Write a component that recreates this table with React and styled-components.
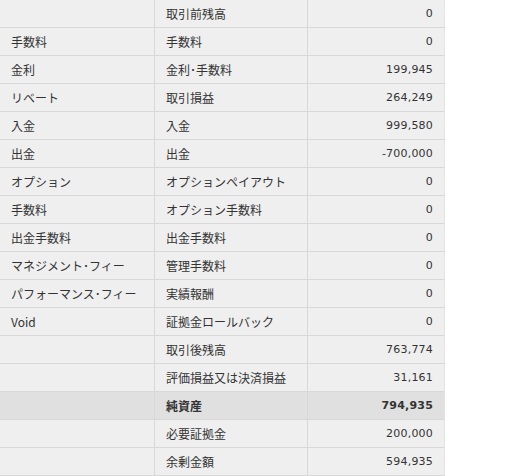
import React from "react";
import styled, { createGlobalStyle } from "styled-components";

const Global = createGlobalStyle`
  html, body { margin: 0; padding: 0; background: #ffffff; }
  body { font-family: "Noto Sans CJK JP", sans-serif; }
`;

const Table = styled.div`
  display: grid;
  grid-template-columns: 155px 153px 137px;
  grid-auto-rows: 28px;
  width: 445px;
  color: #333333;
`;

const Cell = styled.div`
  box-sizing: border-box;
  display: flex;
  align-items: center;
  justify-content: ${(p) => (p.$right ? "flex-end" : "flex-start")};
  padding: 0 11px;
  background: ${(p) => (p.$highlight ? "#e0e0e0" : "#efefef")};
  border-bottom: 1px solid #d8d8d8;
  border-right: ${(p) => (p.$last ? "1px solid #e4e4e4" : "1px solid #d8d8d8")};
  font-family: ${(p) =>
    p.$right
      ? '"DejaVu Sans", Verdana, sans-serif'
      : '"Noto Sans CJK JP", sans-serif'};
  font-size: ${(p) => (p.$right ? "11px" : "12px")};
  font-weight: ${(p) => (p.$bold ? 700 : 400)};
  letter-spacing: ${(p) => (p.$right ? "0.2px" : "0")};
  white-space: nowrap;
  line-height: 14px;
`;

const rows = [
  ["", "取引前残高", "0"],
  ["手数料", "手数料", "0"],
  ["金利", "金利･手数料", "199,945"],
  ["リベート", "取引損益", "264,249"],
  ["入金", "入金", "999,580"],
  ["出金", "出金", "-700,000"],
  ["オプション", "オプションペイアウト", "0"],
  ["手数料", "オプション手数料", "0"],
  ["出金手数料", "出金手数料", "0"],
  ["マネジメント･フィー", "管理手数料", "0"],
  ["パフォーマンス･フィー", "実績報酬", "0"],
  ["Void", "証拠金ロールバック", "0"],
  ["", "取引後残高", "763,774"],
  ["", "評価損益又は決済損益", "31,161"],
  ["", "純資産", "794,935", true],
  ["", "必要証拠金", "200,000"],
  ["", "余剰金額", "594,935"],
];

export default function App() {
  return (
    <>
      <Global />
      <Table>
        {rows.map(([a, b, c, hl], i) => (
          <React.Fragment key={i}>
            <Cell $highlight={hl}>{a}</Cell>
            <Cell $highlight={hl} $bold={hl}>
              {b}
            </Cell>
            <Cell $highlight={hl} $bold={hl} $right $last>
              {c}
            </Cell>
          </React.Fragment>
        ))}
      </Table>
    </>
  );
}
